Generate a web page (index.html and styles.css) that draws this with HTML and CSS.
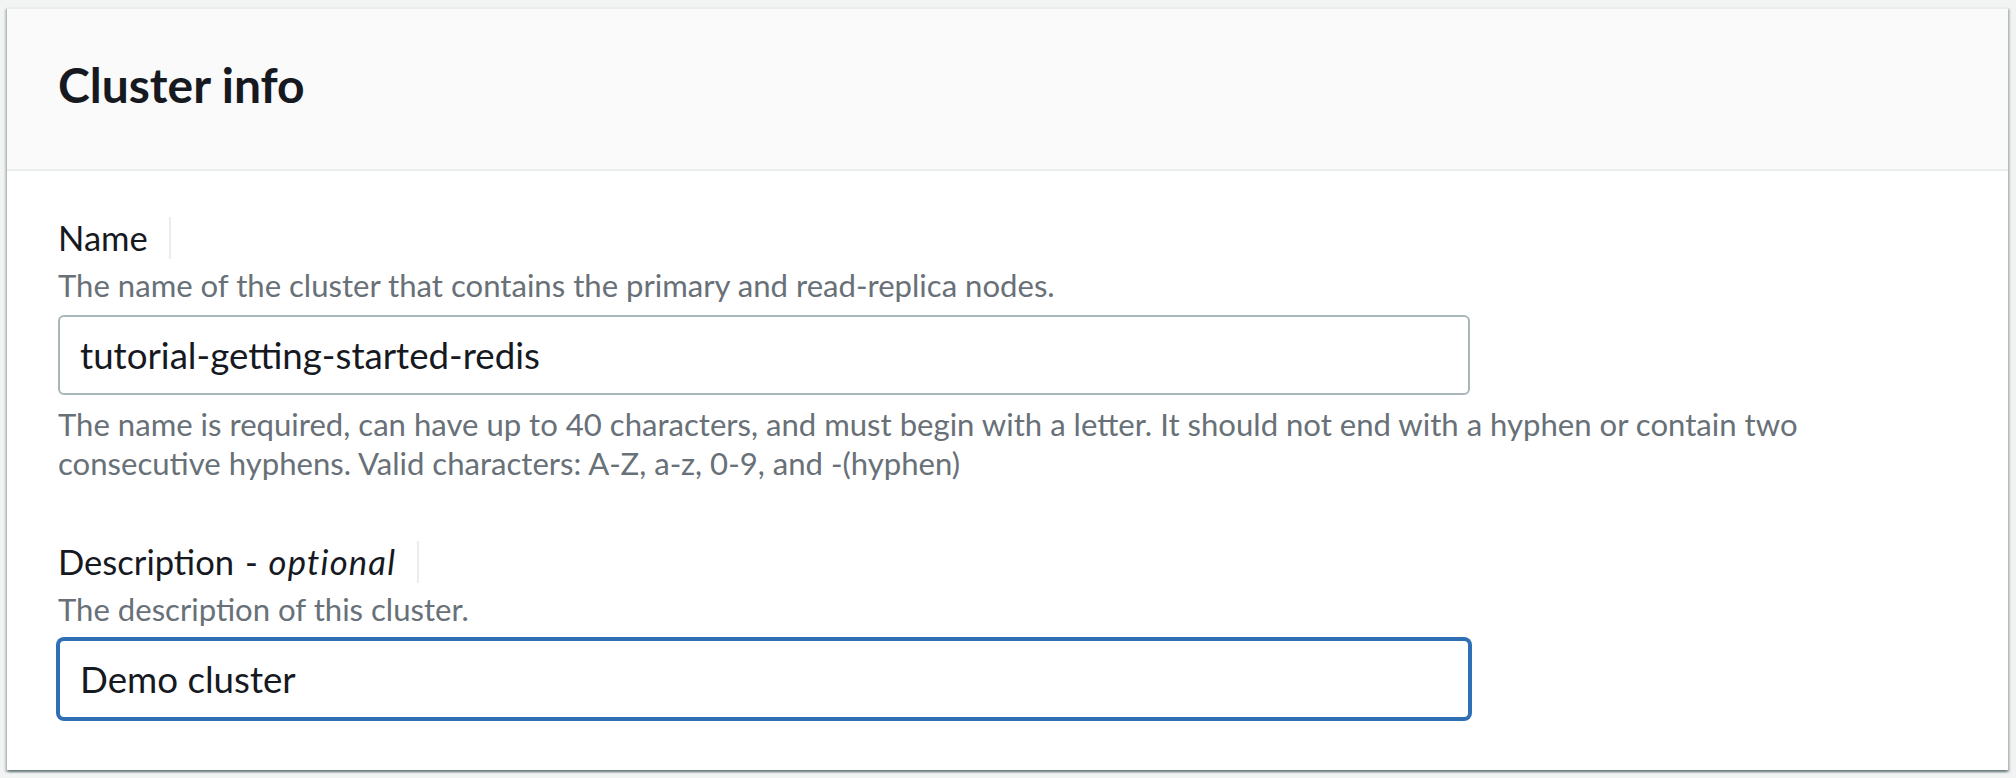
FILE: index.html
```html
<!DOCTYPE html>
<html lang="en">
<head>
<meta charset="utf-8">
<title>Cluster info</title>
<link rel="stylesheet" href="styles.css">
</head>
<body>
<div class="card">
  <div class="card-header">
    <h2 class="card-title">Cluster info</h2>
  </div>
  <div class="card-body">
    <div class="field">
      <div class="label-row"><span class="label">Name</span><span class="label-divider"></span></div>
      <div class="field-desc">The name of the cluster that contains the primary and read-replica nodes.</div>
      <input class="text-input" type="text" value="tutorial-getting-started-redis">
      <div class="constraint">The name is required, can have up to 40 characters, and must begin with a letter. It should not end with a hyphen or contain two consecutive hyphens. Valid characters: A-Z, a-z, 0-9, and -(hyphen)</div>
    </div>
    <div class="field field-second">
      <div class="label-row"><span class="label">Description - <i class="optional">optional</i></span><span class="label-divider"></span></div>
      <div class="field-desc">The description of this cluster.</div>
      <input class="text-input focused" type="text" value="Demo cluster">
    </div>
  </div>
</div>
</body>
</html>
```
FILE: styles.css
```css
* { box-sizing: border-box; }
html, body { margin: 0; padding: 0; }
body {
  background: #f2f3f3;
  font-family: Lato, "Open Sans", sans-serif;
  color: #16191f;
  padding: 7px 8px 7px 7px;
}
.card {
  background: #ffffff;
  border-top: 2px solid #eaeded;
  box-shadow: 0 2px 2px 0 rgba(0, 28, 36, 0.35), 2px 2px 2px 0 rgba(0, 28, 36, 0.18), -2px 2px 2px 0 rgba(0, 28, 36, 0.18);
}
.card-header {
  background: #fafafa;
  border-bottom: 2px solid #eaeded;
  padding: 48px 51px 56px;
}
.card-title {
  margin: 0;
  font-family: Lato, sans-serif;
  font-weight: 700;
  font-size: 48px;
  line-height: 56px;
  color: #16191f;
}
.card-body {
  padding: 46px 51px 51px;
}
.label-row {
  display: flex;
  align-items: stretch;
  height: 42px;
}
.label {
  font-size: 34.6px;
  line-height: 42px;
  color: #16191f;
  word-spacing: 2px;
}
.optional {
  font-style: italic;
  letter-spacing: 1.2px;
}
.label-divider {
  width: 2px;
  margin-left: 21px;
  background: #eaeded;
}
.field-desc {
  margin-top: 7px;
  font-size: 31.1px;
  line-height: 38px;
  color: #687078;
}
.text-input {
  display: block;
  margin: 11px 0 0;
  width: 1412px;
  height: 80px;
  padding: 0 20px;
  border: 2px solid #aab7b8;
  border-radius: 6px;
  background: #ffffff;
  font-family: Lato, sans-serif;
  font-size: 36.7px;
  color: #16191f;
  outline: none;
}
.text-input.focused {
  border-color: #2f6fb6;
  box-shadow: 0 0 0 2px #2f6fb6;
}
.constraint {
  margin-top: 10px;
  max-width: 1800px;
  font-size: 31.1px;
  line-height: 38.5px;
  color: #687078;
}
.field-second {
  margin-top: 59px;
}
```
